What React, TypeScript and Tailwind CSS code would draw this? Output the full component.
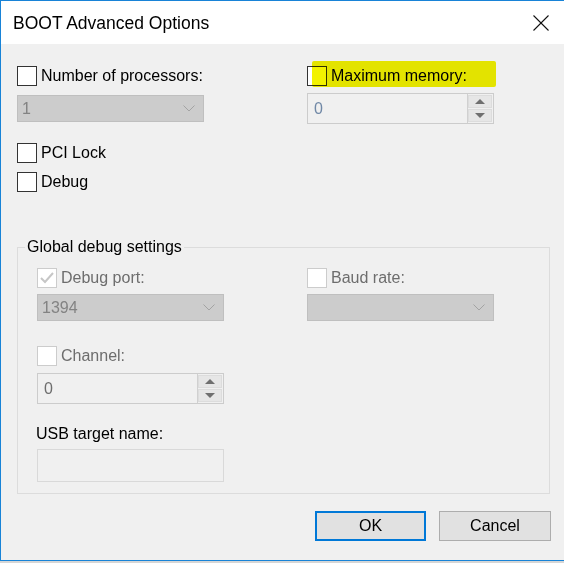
import React from "react";

const font = { fontFamily: '"Liberation Sans", Arial, sans-serif' };

function Check({ disabled, checked }: { disabled?: boolean; checked?: boolean }) {
  return (
    <div
      className={
        "w-[20px] h-[20px] shrink-0 border flex items-center justify-center " +
        (disabled ? "border-[#cccccc] bg-white" : "border-[#333333] bg-white")
      }
    >
      {checked && (
        <svg width="14" height="12" viewBox="0 0 14 12">
          <polyline points="1,6 5,10 13,1" fill="none" stroke="#c6c6c6" strokeWidth="2" />
        </svg>
      )}
    </div>
  );
}

function CheckRow({ label, disabled, checked }: { label: string; disabled?: boolean; checked?: boolean }) {
  return (
    <div className="flex items-center gap-[4px] h-[20px]">
      <Check disabled={disabled} checked={checked} />
      <span className={"text-[16px] leading-[20px] " + (disabled ? "text-[#6d6d6d]" : "text-black")}>{label}</span>
    </div>
  );
}

function Combo({ value }: { value: string }) {
  return (
    <div className="w-[187px] h-[27px] border border-[#bfbfbf] bg-[#cccccc] flex items-center justify-between pl-[4px] pr-[8px]">
      <span className="text-[16px] leading-[20px] text-[#838383]">{value}</span>
      <svg width="12" height="7" viewBox="0 0 12 7">
        <polyline points="0.5,0.5 6,6 11.5,0.5" fill="none" stroke="#a3a3a3" strokeWidth="1" />
      </svg>
    </div>
  );
}

function Spin({ value, color }: { value: string; color: string }) {
  return (
    <div className="w-[187px] h-[31px] border border-[#cccccc] bg-[#f0f0f0] flex">
      <div className={"flex-1 flex items-center pl-[6px] text-[16px] leading-[20px] " + color}>{value}</div>
      <div className="w-[26px] flex flex-col gap-[1px] py-[1px] pr-[1px] border-l border-[#d0d0d0]">
        <div className="flex-1 bg-[#e6e6e6] border border-[#dcdcdc] flex items-center justify-center">
          <svg width="10" height="5" viewBox="0 0 10 5">
            <polygon points="0,5 5,0 10,5" fill="#6f6f6f" />
          </svg>
        </div>
        <div className="flex-1 bg-[#e6e6e6] border border-[#dcdcdc] flex items-center justify-center">
          <svg width="10" height="5" viewBox="0 0 10 5">
            <polygon points="0,0 5,5 10,0" fill="#6f6f6f" />
          </svg>
        </div>
      </div>
    </div>
  );
}

export default function App() {
  return (
    <div className="w-[564px] h-[563px] bg-[#d6d6d6] overflow-hidden" style={font}>
      <div className="w-[564px] h-[561px] border-t border-l border-b border-[#1883d7] flex flex-col bg-[#f0f0f0]">
        {/* title bar */}
        <div className="h-[43px] bg-white flex items-center justify-between pl-[12px] pr-[15px] shrink-0">
          <span className="text-[17.5px] leading-[22px] text-black mt-[1px]">BOOT Advanced Options</span>
          <svg width="16" height="16" viewBox="0 0 16 16">
            <line x1="0.5" y1="0.5" x2="15.5" y2="15.5" stroke="#111" strokeWidth="1.1" />
            <line x1="15.5" y1="0.5" x2="0.5" y2="15.5" stroke="#111" strokeWidth="1.1" />
          </svg>
        </div>

        {/* body */}
        <div className="flex-1 pl-[16px] pt-[22px]">
          <div className="flex gap-[103px] items-start">
            <div className="w-[187px] flex flex-col gap-[9px]">
              <CheckRow label="Number of processors:" />
              <Combo value="1" />
            </div>
            <div className="w-[187px] flex flex-col gap-[7px] relative">
              <CheckRow label="Maximum memory:" />
              <Spin value="0" color="text-[#7088a6]" />
              <div className="absolute left-[5px] top-[-5px] w-[184px] h-[26px] bg-[#f2f200] mix-blend-multiply rounded-[2px]" />
            </div>
          </div>

          <div className="flex flex-col gap-[9px] mt-[19px]">
            <CheckRow label="PCI Lock" />
            <CheckRow label="Debug" />
          </div>

          <fieldset className="mt-[46px] w-[533px] border border-[#dcdcdc] pl-[19px] pb-[11px] pt-[12px]">
            <legend className="-ml-[12px] px-[2px] text-[16px] leading-[18px] text-black">Global debug settings</legend>
            <div className="flex gap-[83px] items-start">
              <div className="w-[187px] flex flex-col">
                <CheckRow label="Debug port:" disabled checked />
                <div className="mt-[6px]">
                  <Combo value="1394" />
                </div>
                <div className="mt-[25px]">
                  <CheckRow label="Channel:" disabled />
                </div>
                <div className="mt-[7px]">
                  <Spin value="0" color="text-[#6d6d6d]" />
                </div>
                <div className="mt-[20px] text-[16px] leading-[20px] text-black -ml-[1px]">USB target name:</div>
                <div className="mt-[5px] w-[187px] h-[33px] border border-[#d9d9d9] bg-[#f0f0f0]" />
              </div>
              <div className="w-[187px] flex flex-col">
                <CheckRow label="Baud rate:" disabled />
                <div className="mt-[6px]">
                  <Combo value="" />
                </div>
              </div>
            </div>
          </fieldset>

          <div className="w-[534px] flex justify-end gap-[13px] mt-[17px]">
            <div className="w-[111px] h-[30px] border-2 border-[#0078d7] bg-[#e1e1e1] flex items-center justify-center text-[16px] text-black">
              OK
            </div>
            <div className="w-[112px] h-[30px] border border-[#adadad] bg-[#e1e1e1] flex items-center justify-center text-[16px] text-black">
              Cancel
            </div>
          </div>
        </div>
      </div>
    </div>
  );
}
